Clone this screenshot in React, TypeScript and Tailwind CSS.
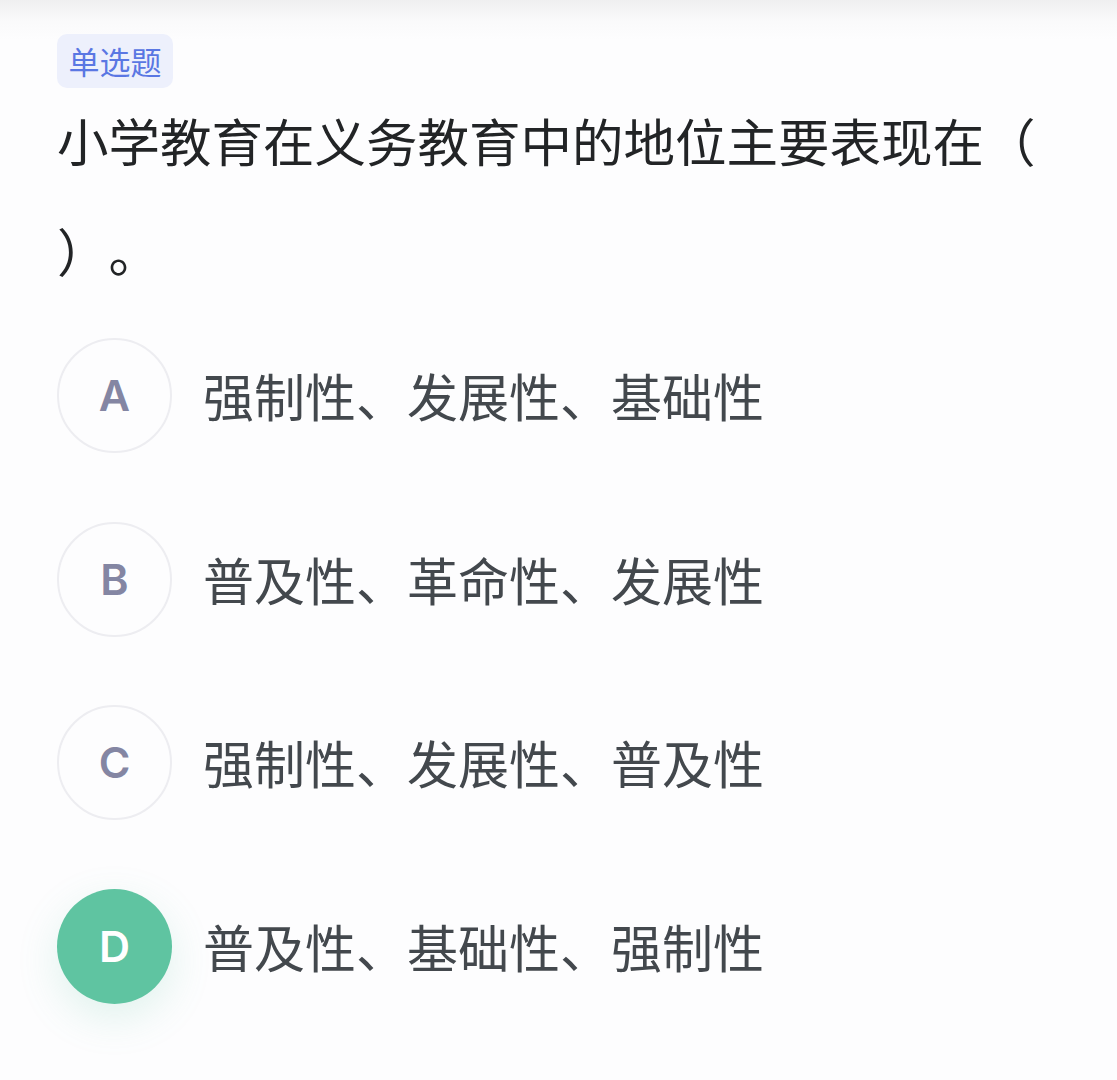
import { useState } from 'react';

const options = [
  { key: 'A', text: '强制性、发展性、基础性' },
  { key: 'B', text: '普及性、革命性、发展性' },
  { key: 'C', text: '强制性、发展性、普及性' },
  { key: 'D', text: '普及性、基础性、强制性' },
];

export default function App() {
  const [selected, setSelected] = useState('D');

  return (
    <div
      className="w-[1117px] h-[1080px] overflow-hidden bg-[linear-gradient(to_bottom,#efeff0_0px,#fafafb_22px,#fdfdfe_40px)] pl-[57px] pr-[57px] pt-[34px] [text-spacing-trim:space-all]"
      style={{ fontFamily: '"Noto Sans CJK SC", "Noto Sans", sans-serif' }}
    >
      {/* 题型标签 */}
      <div className="inline-flex h-[54px] w-[116px] items-center justify-center rounded-[10px] bg-[#edf0fc] text-[31px] text-[#5a77e3]">
        单选题
      </div>

      {/* 题干 */}
      <p className="-mt-[3px] text-[51.5px] leading-[110px] text-[#222426]">
        小学教育在义务教育中的地位主要表现在（ ）。
      </p>

      {/* 选项 */}
      <div className="mt-[33px] flex flex-col gap-[68.5px]">
        {options.map((o) => {
          const active = selected === o.key;
          return (
            <button
              key={o.key}
              type="button"
              onClick={() => setSelected(o.key)}
              className="flex items-center gap-[31px] text-left"
            >
              <span
                className={
                  active
                    ? 'flex h-[115px] w-[115px] flex-shrink-0 items-center justify-center rounded-full bg-[#5fc4a1] text-[43px] font-semibold text-white shadow-[0_14px_40px_rgba(95,196,161,0.18)]'
                    : 'flex h-[115px] w-[115px] flex-shrink-0 items-center justify-center rounded-full border-[2.5px] border-[#ededf1] text-[43px] font-semibold text-[#8486a3]'
                }
                style={{ fontFamily: 'Inter, "Liberation Sans", sans-serif' }}
              >
                {o.key}
              </span>
              <span className="text-[51px] leading-none text-[#43484d]">{o.text}</span>
            </button>
          );
        })}
      </div>
    </div>
  );
}
